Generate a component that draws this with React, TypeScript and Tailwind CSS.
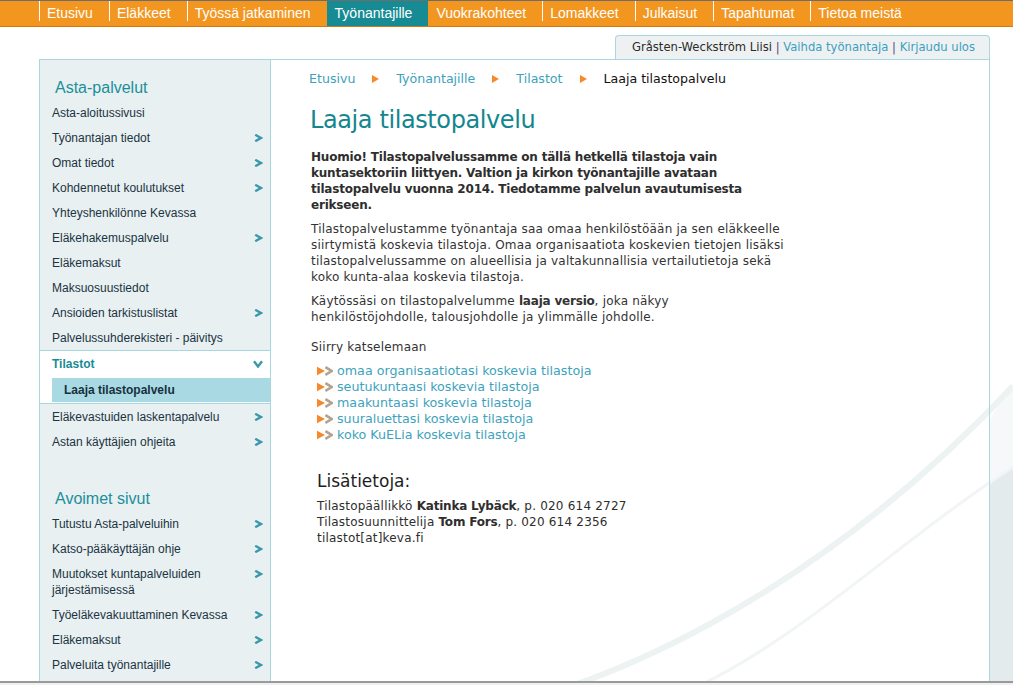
import React from 'react';

const verdana = { fontFamily: '"DejaVu Sans", Verdana, sans-serif' };
const arial = { fontFamily: '"Liberation Sans", Arial, sans-serif' };

const navItems = [
  'Etusivu',
  'Eläkkeet',
  'Työssä jatkaminen',
  'Työnantajille',
  'Vuokrakohteet',
  'Lomakkeet',
  'Julkaisut',
  'Tapahtumat',
  'Tietoa meistä',
];

function Chevron() {
  return (
    <svg width="9" height="8" viewBox="0 0 9 8" className="shrink-0">
      <polyline points="1.2,0.8 7,4 1.2,7.2" fill="none" stroke="#3a98aa" strokeWidth="2.4" />
    </svg>
  );
}

function ChevronDown() {
  return (
    <svg width="10" height="8" viewBox="0 0 10 8" className="shrink-0">
      <polyline points="1,1.2 5,6.5 9,1.2" fill="none" stroke="#3a98aa" strokeWidth="2.4" />
    </svg>
  );
}

function Crumb() {
  return (
    <svg width="7" height="8" viewBox="0 0 7 8" className="mx-[17px]">
      <polygon points="0,0 7,4 0,8" fill="#f7892c" />
    </svg>
  );
}

function LinkArrow() {
  return (
    <svg width="16" height="10" viewBox="0 0 16 10" className="shrink-0">
      <polygon points="0,0.8 8,5 0,9.2" fill="#f7892c" />
      <polyline points="8.4,1.2 14.6,5 8.4,8.8" fill="none" stroke="#b3a291" strokeWidth="2.6" />
    </svg>
  );
}

type Item = { label: string; arrow?: boolean };

const astaItems: Item[] = [
  { label: 'Asta-aloitussivusi' },
  { label: 'Työnantajan tiedot', arrow: true },
  { label: 'Omat tiedot', arrow: true },
  { label: 'Kohdennetut koulutukset', arrow: true },
  { label: 'Yhteyshenkilönne Kevassa' },
  { label: 'Eläkehakemuspalvelu', arrow: true },
  { label: 'Eläkemaksut' },
  { label: 'Maksuosuustiedot' },
  { label: 'Ansioiden tarkistuslistat', arrow: true },
  { label: 'Palvelussuhderekisteri - päivitys' },
];

const avoimetItems: Item[] = [
  { label: 'Tutustu Asta-palveluihin', arrow: true },
  { label: 'Katso-pääkäyttäjän ohje', arrow: true },
  { label: 'Muutokset kuntapalveluiden järjestämisessä', arrow: true },
  { label: 'Työeläkevakuuttaminen Kevassa', arrow: true },
  { label: 'Eläkemaksut', arrow: true },
  { label: 'Palveluita työnantajille', arrow: true },
];

function SideRow({ item }: { item: Item }) {
  return (
    <div className="flex items-start justify-between pl-[12px] pr-[7px] pt-[5px] pb-[4px] text-[12px] leading-[16px] text-[#1c3341]">
      <span className="max-w-[180px]">{item.label}</span>
      {item.arrow && (
        <span className="mt-[4px]">
          <Chevron />
        </span>
      )}
    </div>
  );
}

const links = [
  'omaa organisaatiotasi koskevia tilastoja',
  'seutukuntaasi koskevia tilastoja',
  'maakuntaasi koskevia tilastoja',
  'suuraluettasi koskevia tilastoja',
  'koko KuELia koskevia tilastoja',
];

export default function App() {
  return (
    <div className="relative h-[685px] w-full overflow-hidden bg-white flex flex-col" style={arial}>
      {/* background swoosh */}
      <svg className="absolute left-0 top-0 pointer-events-none" width="1013" height="685" viewBox="0 0 1013 685">
        <path d="M990 420 C 998 405, 1005 395, 1013 386 L1013 685 L990 685 Z" fill="#f6f8f9" />
        <path d="M990 482 C 998 476, 1005 471, 1013 467 L1013 685 L990 685 Z" fill="#e4ebed" />
        <path d="M560 690 C 680 650, 850 560, 1013 386" fill="none" stroke="#edf2f3" strokeWidth="6" />
        <path d="M690 690 C 800 640, 900 540, 1013 467" fill="none" stroke="#f1f5f6" strokeWidth="3" />
      </svg>

      {/* Top navigation */}
      <nav className="relative h-[27px] shrink-0 border-t border-[#6d6d6d] border-b border-b-[#d5780f] bg-[#f2961f] flex pl-[39px]">
        {navItems.map((label, i) => {
          const active = label === 'Työnantajille';
          const showSep = !active && navItems[i - 1] !== 'Työnantajille';
          return (
            <div key={label} className={`flex h-full ${active ? 'bg-[#168b94]' : ''}`}>
              <span className={`w-px h-[20px] ${showSep ? 'bg-white' : 'bg-transparent'}`} />
              <span className="pl-[7px] pr-[16px] text-[14px] leading-[25px] text-white">{label}</span>
            </div>
          );
        })}
      </nav>

      <div className="relative flex-1 min-h-0 flex">
        <div className="ml-[39px] w-[951px] flex flex-col">
          {/* User box */}
          <div className="flex justify-end mt-[8px]">
            <div
              className="h-[24px] border border-b-0 border-[#a9d7df] rounded-t-[4px] bg-[#eef1f2] pl-[16px] pr-[14px] text-[11.6px] leading-[23px] text-[#2b2b2b]"
              style={verdana}
            >
              Gråsten-Weckström Liisi <span className="text-[#5e3f7c]">|</span>{' '}
              <span className="text-[#3b9fbf]">Vaihda työnantaja</span>{' '}
              <span className="text-[#5e3f7c]">|</span>{' '}
              <span className="text-[#3b9fbf]">Kirjaudu ulos</span>
            </div>
          </div>

          {/* Main box */}
          <div className="flex-1 min-h-0 flex border border-b-0 border-[#a9d7df]">
            {/* Sidebar */}
            <aside className="w-[231px] shrink-0 bg-[#e8f0f2] border-r border-[#a9d7df]">
              <h2 className="pl-[15px] pt-[18px] pb-[2px] text-[16px] leading-[20px] text-[#1b8f99]">Asta-palvelut</h2>
              {astaItems.map((it) => (
                <SideRow key={it.label} item={it} />
              ))}
              <div className="bg-white border-y border-[#a9d7df] pb-[1px]">
                <div className="flex items-center justify-between pl-[12px] pr-[7px] h-[25px] text-[12px] font-bold text-[#178b95]">
                  <span>Tilastot</span>
                  <ChevronDown />
                </div>
                <div className="ml-[12px] mt-[2px] h-[24px] bg-[#a9dae4] pl-[12px] text-[12px] leading-[24px] font-bold text-[#17303d]">
                  Laaja tilastopalvelu
                </div>
              </div>
              <SideRow item={{ label: 'Eläkevastuiden laskentapalvelu', arrow: true }} />
              <SideRow item={{ label: 'Astan käyttäjien ohjeita', arrow: true }} />
              <h2 className="pl-[15px] pt-[35px] pb-[2px] text-[16px] leading-[20px] text-[#1b8f99]">Avoimet sivut</h2>
              {avoimetItems.map((it) => (
                <SideRow key={it.label} item={it} />
              ))}
            </aside>

            {/* Content */}
            <main className="flex-1 min-w-0 text-[12px] leading-[16px] tracking-[0.2px] text-[#333]" style={verdana}>
              <div className="pl-[38px] pt-[11px]">
                <div className="flex items-center text-[12.6px] leading-[16px] tracking-normal">
                  <span className="text-[#3ea2bb]">Etusivu</span>
                  <Crumb />
                  <span className="text-[#3ea2bb]">Työnantajille</span>
                  <Crumb />
                  <span className="text-[#3ea2bb]">Tilastot</span>
                  <Crumb />
                  <span className="text-[#111]">Laaja tilastopalvelu</span>
                </div>

                <h1 className="mt-[18px] pl-[1px] text-[24px] leading-[30px] tracking-[-0.4px] text-[#13868f]">
                  Laaja tilastopalvelu
                </h1>

                <div className="pl-[2px]">
                  <p className="mt-[14px] font-bold tracking-[-0.2px] text-[#2e2e2e]">
                    Huomio! Tilastopalvelussamme on tällä hetkellä tilastoja vain
                    <br />
                    kuntasektoriin liittyen. Valtion ja kirkon työnantajille avataan
                    <br />
                    tilastopalvelu vuonna 2014. Tiedotamme palvelun avautumisesta
                    <br />
                    erikseen.
                  </p>
                  <p className="mt-[8px]">
                    Tilastopalvelustamme työnantaja saa omaa henkilöstöään ja sen eläkkeelle
                    <br />
                    siirtymistä koskevia tilastoja. Omaa organisaatiota koskevien tietojen lisäksi
                    <br />
                    tilastopalvelussamme on alueellisia ja valtakunnallisia vertailutietoja sekä
                    <br />
                    koko kunta-alaa koskevia tilastoja.
                  </p>
                  <p className="mt-[8px]">
                    Käytössäsi on tilastopalvelumme <b className="tracking-[-0.2px]">laaja versio</b>, joka näkyy
                    <br />
                    henkilöstöjohdolle, talousjohdolle ja ylimmälle johdolle.
                  </p>
                  <p className="mt-[14px]">Siirry katselemaan</p>
                  <ul className="mt-[8px] pl-[6px]">
                    {links.map((l) => (
                      <li key={l} className="flex items-center gap-[4px] text-[12.7px] tracking-normal text-[#3ea2bb]">
                        <LinkArrow />
                        <span>{l}</span>
                      </li>
                    ))}
                  </ul>
                </div>

                <div className="pl-[8px]">
                  <h3 className="mt-[27px] text-[17px] leading-[22px] tracking-normal text-[#1e1e1e]">Lisätietoja:</h3>
                  <p className="mt-[6px] text-[#2e2e2e]">
                    Tilastopäällikkö <b className="tracking-[-0.2px]">Katinka Lybäck</b>, p. 020 614 2727
                    <br />
                    Tilastosuunnittelija <b className="tracking-[-0.2px]">Tom Fors</b>, p. 020 614 2356
                    <br />
                    tilastot[at]keva.fi
                  </p>
                </div>
              </div>
            </main>
          </div>
        </div>
      </div>

      {/* Bottom scrollbar strip */}
      <div className="relative h-[4px] shrink-0 border-t-2 border-[#9a9a9a] bg-[#f0f0f0]" />
    </div>
  );
}
